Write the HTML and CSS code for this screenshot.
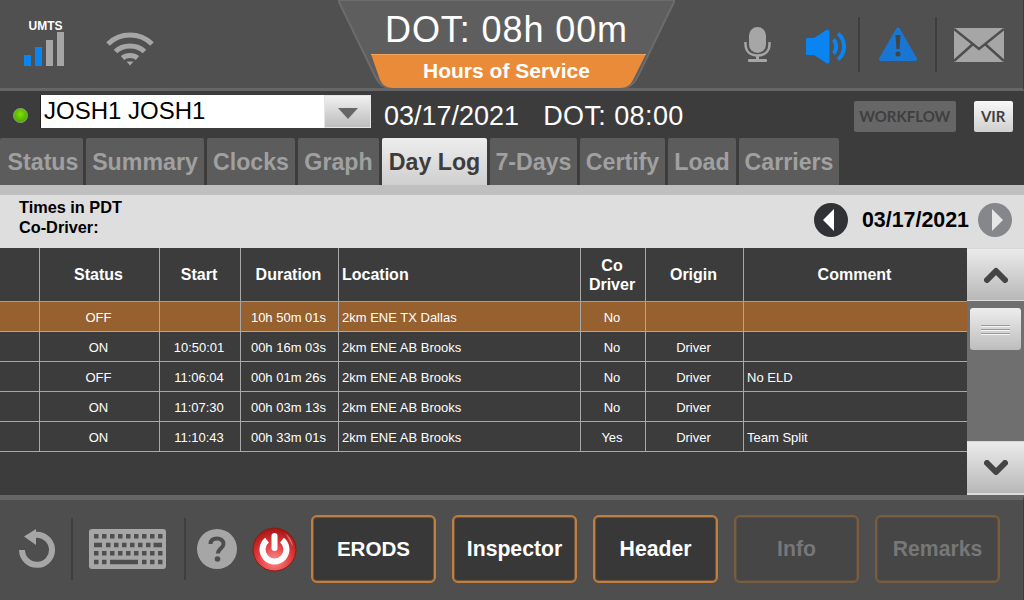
FILE: index.html
```html
<!DOCTYPE html>
<html lang="en">

<head>
  <meta charset="UTF-8">
  <title>Hours of Service</title>
  <link rel="stylesheet" href="styles.css">
</head>

<body>
  <div id="app">
    <header id="topbar">
      <div class="top-left">
        <div class="signal">
          <span class="signal-name">UMTS</span>
          <svg width="40" height="34" viewBox="0 0 40 34">
            <rect x="0" y="23" width="7" height="11" fill="#0a84f0" />
            <rect x="11" y="15" width="7" height="19" fill="#0a84f0" />
            <rect x="22" y="8" width="7" height="26" fill="#a6a6a6" />
            <rect x="33" y="0" width="7" height="34" fill="#a6a6a6" />
          </svg>
        </div>
        <svg class="wifi" width="48" height="36" viewBox="0 0 48 36" fill="none" stroke="#a6a6a6" stroke-width="5">
          <path d="M2 13C14 1 34 1 46 13" />
          <path d="M9.5 20.5C17 13 31 13 38.5 20.5" />
          <path d="M16.5 27C20.5 23.5 27.5 23.5 31.5 27" />
          <path d="M20.5 30.5h7l-3.5 4z" fill="#a6a6a6" stroke="none" />
        </svg>
      </div>
      <div class="hood">
        <svg class="hood-bg" width="337" height="88" viewBox="0 0 337 88">
          <path d="M0 0H337L300 76Q294 88 284 88H53Q43 88 37 76Z" fill="#5e5e5e" stroke="#6c6c6c" stroke-width="2" />
          <path d="M33 54H308L295 80Q291 88 282 88H55Q46 88 42 80Z" fill="#ea8b3a" />
          <path d="M33 54.5H308" stroke="#f0a45c" />
        </svg>
        <div class="hood-time">DOT: 08h 00m</div>
        <div class="hood-title">Hours of Service</div>
      </div>
      <div class="top-right">
        <svg class="mic" width="28" height="35" viewBox="0 0 28 35">
          <rect x="5" y="0" width="17" height="26" rx="8.5" fill="#a6a6a6" />
          <path d="M1.5 15V17C1.5 24 6 28.5 13.5 28.5S25.5 24 25.5 17V15" fill="none" stroke="#a6a6a6" stroke-width="2.5" />
          <path d="M13.5 28V33" stroke="#a6a6a6" stroke-width="3" />
          <rect x="4" y="32" width="19" height="3" rx="1" fill="#a6a6a6" />
        </svg>
        <svg class="speaker" width="42" height="35" viewBox="0 0 42 35" fill="none" stroke="#0a84f0">
          <path d="M1 9H8L21 0.5Q23.5 0 23.5 3V32Q23.5 35 21 34.5L8 26H1Q0 26 0 25V10Q0 9 1 9Z" fill="#0a84f0" stroke="none" />
          <path d="M27.5 10.5C31 14 31 21 27.5 24.5" stroke-width="4" />
          <path d="M32 4.5C40 11 40 24 32 30.5" stroke-width="4" />
        </svg>
        <span class="top-sep"></span>
        <svg class="warn" width="38" height="35" viewBox="0 0 38 35">
          <path d="M19 2.5L36 32H2Z" fill="#1976d2" stroke="#1976d2" stroke-width="4" stroke-linejoin="round" />
          <path d="M16.5 8H21.5L20.5 22H17.5Z" fill="#444" />
          <circle cx="19" cy="27" r="2.5" fill="#444" />
        </svg>
        <span class="top-sep sep-b"></span>
        <svg class="mail" width="50" height="34" viewBox="0 0 50 34">
          <rect width="50" height="34" fill="#a6a6a6" />
          <path d="M0 1L25 21L50 1M0 33L19 16M50 33L31 16" fill="none" stroke="#4e4e4e" stroke-width="2.5" />
        </svg>
      </div>
    </header>

    <section id="driver-row">
      <span class="led"></span>
      <div class="driver-select">
        <span class="driver-name">JOSH1 JOSH1</span>
        <span class="driver-arrow"></span>
      </div>
      <span class="driver-date">03/17/2021</span>
      <span class="driver-dot">DOT: 08:00</span>
      <button class="btn-workflow">WORKFLOW</button>
      <button class="btn-vir">VIR</button>
    </section>

    <nav id="tabs">
      <span class="tab">Status</span>
      <span class="tab">Summary</span>
      <span class="tab">Clocks</span>
      <span class="tab">Graph</span>
      <span class="tab active">Day Log</span>
      <span class="tab">7-Days</span>
      <span class="tab">Certify</span>
      <span class="tab">Load</span>
      <span class="tab">Carriers</span>
    </nav>
    <div id="strip"></div>

    <section id="info">
      <div class="info-text">
        <div>Times in PDT</div>
        <div>Co-Driver:</div>
      </div>
      <div class="date-nav">
        <svg width="34" height="34" viewBox="0 0 34 34">
          <circle cx="17" cy="17" r="17" fill="#303236" />
          <path d="M9 17L20 6V28Z" fill="#fff" />
        </svg>
        <span class="date-label">03/17/2021</span>
        <svg width="34" height="34" viewBox="0 0 34 34">
          <circle cx="17" cy="17" r="17" fill="#85878a" />
          <path d="M25 17L14 6V28Z" fill="#e6e6e6" />
        </svg>
      </div>
    </section>

    <main id="log">
      <div class="log-table">
        <table>
          <thead>
            <tr>
              <th class="c-flag"></th>
              <th class="c-status">Status</th>
              <th class="c-start">Start</th>
              <th class="c-dur">Duration</th>
              <th class="c-loc left">Location</th>
              <th class="c-co">Co<br>Driver</th>
              <th class="c-org">Origin</th>
              <th class="c-com">Comment</th>
            </tr>
          </thead>
          <tbody>
            <tr class="selected">
              <td></td><td>OFF</td><td></td><td>10h 50m 01s</td><td class="left">2km ENE TX Dallas</td><td>No</td><td></td><td class="left"></td>
            </tr>
            <tr>
              <td></td><td>ON</td><td>10:50:01</td><td>00h 16m 03s</td><td class="left">2km ENE AB Brooks</td><td>No</td><td>Driver</td><td class="left"></td>
            </tr>
            <tr>
              <td></td><td>OFF</td><td>11:06:04</td><td>00h 01m 26s</td><td class="left">2km ENE AB Brooks</td><td>No</td><td>Driver</td><td class="left">No ELD</td>
            </tr>
            <tr>
              <td></td><td>ON</td><td>11:07:30</td><td>00h 03m 13s</td><td class="left">2km ENE AB Brooks</td><td>No</td><td>Driver</td><td class="left"></td>
            </tr>
            <tr>
              <td></td><td>ON</td><td>11:10:43</td><td>00h 33m 01s</td><td class="left">2km ENE AB Brooks</td><td>Yes</td><td>Driver</td><td class="left">Team Split</td>
            </tr>
          </tbody>
        </table>
      </div>
      <div class="scroller">
        <div class="scroll-btn">
          <svg width="24" height="16" viewBox="0 0 24 16"><path d="M3 13L12 4L21 13" fill="none" stroke="#444" stroke-width="6" stroke-linecap="round" stroke-linejoin="round" /></svg>
        </div>
        <div class="scroll-track">
          <div class="scroll-thumb"><span></span><span></span><span></span></div>
        </div>
        <div class="scroll-btn down">
          <svg width="24" height="16" viewBox="0 0 24 16"><path d="M3 3L12 12L21 3" fill="none" stroke="#444" stroke-width="6" stroke-linecap="round" stroke-linejoin="round" /></svg>
        </div>
      </div>
    </main>

    <footer id="bottombar">
      <svg class="undo" width="36" height="40" viewBox="0 0 36 40">
        <path d="M16 6A15 15 0 1 1 3 21" fill="none" stroke="#a6a6a6" stroke-width="6" />
        <path d="M17 0V16L5 7.5Z" fill="#a6a6a6" />
      </svg>
      <span class="bottom-sep sep-one"></span>
      <svg class="keyboard" width="77" height="40" viewBox="0 0 77 40">
        <rect width="77" height="40" rx="3" fill="#a6a6a6" />
        <g fill="none" stroke="#4e4e4e" stroke-width="4.5">
          <path d="M5 7.2H73.5" stroke-dasharray="4.5 3.5" />
          <path d="M5 16H13M64.5 16H73" />
          <path d="M17 16H61.5" stroke-dasharray="4.5 3.5" />
          <path d="M5 24.2H73.5" stroke-dasharray="4.5 3.5" />
          <path d="M5 33H17.5" stroke-dasharray="4.5 3.5" />
          <path d="M21 33H49" />
          <path d="M53 33H73.5" stroke-dasharray="4.5 3.5" />
        </g>
      </svg>
      <span class="bottom-sep sep-two"></span>
      <svg class="help" width="40" height="40" viewBox="0 0 40 40">
        <circle cx="20" cy="20" r="20" fill="#a6a6a6" />
        <path d="M13.5 15C13.5 11 16.5 9.5 20 9.5S26.5 11.5 26.5 15C26.5 19 21 19.5 21 24.5" fill="none" stroke="#4e4e4e" stroke-width="4" />
        <circle cx="20.5" cy="30" r="2.8" fill="#4e4e4e" />
      </svg>
      <svg class="power" width="45" height="45" viewBox="0 0 45 45">
        <defs>
          <radialGradient id="powerfill" cx="50%" cy="75%" r="72%">
            <stop offset="0" stop-color="#ff8a8a" />
            <stop offset="0.55" stop-color="#e23a3e" />
            <stop offset="1" stop-color="#a81616" />
          </radialGradient>
        </defs>
        <circle cx="22.5" cy="22.5" r="21.5" fill="url(#powerfill)" stroke="#8a1a10" />
        <path d="M15 13.1A12 12 0 1 0 30 13.1" fill="none" stroke="#fff" stroke-width="6" />
        <path d="M22.5 9V21" stroke="#fff" stroke-width="6" stroke-linecap="round" />
        <path d="M33 6A19 19 0 0 1 41 20C38 15 36 10 33 6Z" fill="#fff" opacity=".35" />
      </svg>
      <div class="actions">
        <button class="action erods">ERODS</button>
        <button class="action">Inspector</button>
        <button class="action">Header</button>
        <button class="action off">Info</button>
        <button class="action off">Remarks</button>
      </div>
    </footer>
  </div>
</body>

</html>
```

FILE: styles.css
```css
* {
  box-sizing: border-box;
}

html,
body {
  margin: 0;
  height: 100%;
  overflow: hidden;
}

body {
  background-color: #3c3c3c;
  font-family: "Liberation Sans", Arial, sans-serif;
}

#app {
  width: 1024px;
  height: 600px;
  display: flex;
  flex-direction: column;
}

/* top bar */
#topbar {
  height: 91px;
  flex: none;
  display: grid;
  grid-template-columns: 338px 337px 1fr;
  background-color: #505050;
  border-bottom: 3px solid #666;
  border-right: 1px solid #3c3c3c;
}

.top-left {
  display: flex;
  align-items: flex-start;
  padding: 20px 0 0 24px;
}

.signal {
  width: 40px;
  display: flex;
  flex-direction: column;
  align-items: center;
}

.signal-name {
  color: #fff;
  font-size: 12px;
  font-weight: bold;
  line-height: 12px;
  margin-left: 3px;
}

.wifi {
  margin: 11px 0 0 42px;
}

.hood {
  position: relative;
  height: 88px;
  text-align: center;
}

.hood-bg {
  position: absolute;
  left: 0;
  top: 0;
}

.hood-time {
  position: relative;
  color: #fff;
  font-size: 36px;
  letter-spacing: .9px;
  line-height: 54px;
  padding-top: 3px;
  height: 54px;
}

.hood-title {
  position: relative;
  color: #fff;
  font-size: 21px;
  font-weight: bold;
  line-height: 34px;
}

.top-right {
  display: flex;
  align-items: flex-start;
  padding: 27px 0 0 69px;
}

.speaker {
  margin: 2px 0 0 34px;
}

.top-sep {
  width: 2px;
  height: 55px;
  margin: -10px 0 0 10px;
  background-color: #3e3e3e;
}

.warn {
  margin-left: 19px;
}

.sep-b {
  margin-left: 18px;
}

.mail {
  margin: 1px 0 0 17px;
}

/* driver row */
#driver-row {
  height: 47px;
  flex: none;
  display: flex;
  align-items: flex-start;
  padding-top: 4px;
  background-color: #3c3c3c;
}

.led {
  width: 15px;
  height: 15px;
  margin: 13px 12px 0 13px;
  border-radius: 50%;
  border: 1px solid #86b070;
  background: radial-gradient(circle at 50% 40%, #7fe000, #3f9a00);
}

.driver-select {
  width: 331px;
  height: 33px;
  display: flex;
  background-color: #fff;
  border-left: 1px solid #222;
}

.driver-name {
  flex: 1;
  padding-left: 3px;
  color: #000;
  font-size: 24px;
  line-height: 32px;
}

.driver-arrow {
  width: 47px;
  position: relative;
  background: linear-gradient(#f0f0f0, #bdbdbd);
  border: 1px solid #e4e4e4;
}

.driver-arrow::after {
  content: "";
  position: absolute;
  left: 13px;
  top: 12px;
  border-left: 10px solid transparent;
  border-right: 10px solid transparent;
  border-top: 11px solid #666;
}

.driver-date,
.driver-dot {
  color: #fff;
  font-size: 27px;
  line-height: 42px;
}

.driver-date {
  margin-left: 13px;
}

.driver-dot {
  margin-left: 24px;
  letter-spacing: .4px;
}

.btn-workflow,
.btn-vir {
  height: 31px;
  padding: 0 0 1px;
  border: 0;
  border-radius: 2px;
  margin-top: 6px;
  font-family: "Lato", "Liberation Sans", sans-serif;
  font-weight: bold;
  font-size: 15px;
}

.btn-workflow {
  width: 102px;
  margin-left: 170px;
  background-color: #666;
  color: #3f3f3f;
}

.btn-vir {
  width: 39px;
  margin-left: 18px;
  background: linear-gradient(#f8f8f8, #cfcfcf);
  color: #3f3f3f;
}

/* tabs */
#tabs {
  height: 47px;
  flex: none;
  display: flex;
  gap: 3px;
  background-color: #3c3c3c;
}

.tab {
  border-radius: 2px 2px 0 0;
  background-color: #5c5c5c;
  color: #a0a0a0;
  font-size: 23.2px;
  font-weight: bold;
  line-height: 48px;
  text-align: center;
  white-space: nowrap;
}

.tab:nth-child(1) { width: 83px; padding-left: 3px; }
.tab:nth-child(2) { width: 118px; }
.tab:nth-child(3) { width: 88px; }
.tab:nth-child(4) { width: 81px; }
.tab:nth-child(5) { width: 105px; }
.tab:nth-child(6) { width: 87px; }
.tab:nth-child(7) { width: 85px; }
.tab:nth-child(8) { width: 68px; }
.tab:nth-child(9) { width: 100px; }

.tab.active {
  background: linear-gradient(#ededed, #cfcfcf);
  color: #3c3c3c;
}

#strip {
  height: 10px;
  flex: none;
  background-color: #bfbfbf;
}

/* info row */
#info {
  height: 53px;
  flex: none;
  display: flex;
  justify-content: space-between;
  padding: 2px 12px 0 19px;
  background-color: #dedede;
}

.info-text {
  color: #000;
  font-size: 16.3px;
  font-weight: bold;
  line-height: 20px;
}

.date-nav {
  display: flex;
  align-items: center;
  height: 44px;
  padding-top: 2px;
}

.date-label {
  margin: 0 9px 0 14px;
  color: #000;
  font-size: 21.4px;
  font-weight: bold;
}

/* log table */
#log {
  height: 247px;
  flex: none;
  display: flex;
  background-color: #3c3c3c;
}

.log-table {
  width: 967px;
  flex: none;
}

table {
  width: 967px;
  table-layout: fixed;
  border-spacing: 0;
  color: #fff;
}

th,
td {
  padding: 0 2px 0 0;
  text-align: center;
  border-right: 1px solid #a8a8a8;
  border-bottom: 1px solid #a8a8a8;
}

th:last-child,
td:last-child {
  border-right: 0;
}

th {
  height: 54px;
  font-size: 16px;
  line-height: 19px;
  border-bottom-color: #ea8b3a;
}

td {
  height: 30px;
  padding-top: 1px;
  font-size: 13px;
  font-weight: normal;
}

th.left,
td.left {
  text-align: left;
  padding-left: 3px;
}

.selected td {
  background-color: #96602f;
}

.c-flag {
  width: 40px;
}

.c-status {
  width: 120px;
}

.c-start {
  width: 81px;
}

.c-dur {
  width: 98px;
}

.c-loc {
  width: 242px;
}

.c-co {
  width: 65px;
}

.c-org {
  width: 98px;
}

.c-com {
  width: 223px;
}

/* scroller */
.scroller {
  flex: 1;
  display: flex;
  flex-direction: column;
  background-color: #706f6f;
}

.scroll-btn {
  height: 53px;
  flex: none;
  display: flex;
  align-items: center;
  justify-content: center;
  background: linear-gradient(#ebebeb, #b8b8b8);
  border-top: 1px solid #d8d8d8;
  border-bottom: 1px solid #dcdcdc;
}

.scroll-btn.down {
  height: 54px;
  border-bottom-width: 2px;
}

.scroll-track {
  flex: 1;
  padding: 7px 3px 0;
}

.scroll-thumb {
  height: 42px;
  display: flex;
  flex-direction: column;
  justify-content: center;
  align-items: center;
  gap: 3px;
  border-radius: 3px;
  background: linear-gradient(#ededed, #bdbdbd);
}

.scroll-thumb span {
  width: 29px;
  height: 1px;
  background-color: #9a9a9a;
  box-shadow: 0 1px 0 #f4f4f4;
}

/* bottom bar */
#bottombar {
  height: 105px;
  flex: none;
  display: flex;
  align-items: center;
  padding: 0 0 2px 19px;
  background-color: #4e4e4e;
  border-top: 5px solid #666;
  border-right: 1px solid #3c3c3c;
}

.bottom-sep {
  width: 2px;
  height: 62px;
  background-color: #3e3e3e;
}

.sep-one {
  margin: 0 16px 0 16px;
}

.sep-two {
  margin: 0 11px 0 18px;
}

.power {
  margin-left: 15px;
}

.actions {
  display: flex;
  gap: 16px;
  margin-left: 14px;
}

.action {
  width: 125px;
  height: 68px;
  padding: 0;
  border: 2px solid #c17f3f;
  border-radius: 6px;
  background-color: #383838;
  box-shadow: inset 0 0 0 1px rgba(193, 127, 63, .4);
  color: #fff;
  font-family: "Liberation Sans", Arial, sans-serif;
  font-size: 21.2px;
  font-weight: bold;
}

.action.erods {
  font-size: 20.6px;
}

.action.off {
  border-color: #7a5c3e;
  background-color: #464646;
  box-shadow: inset 0 0 0 1px rgba(122, 92, 62, .4);
  color: #777;
}
```
